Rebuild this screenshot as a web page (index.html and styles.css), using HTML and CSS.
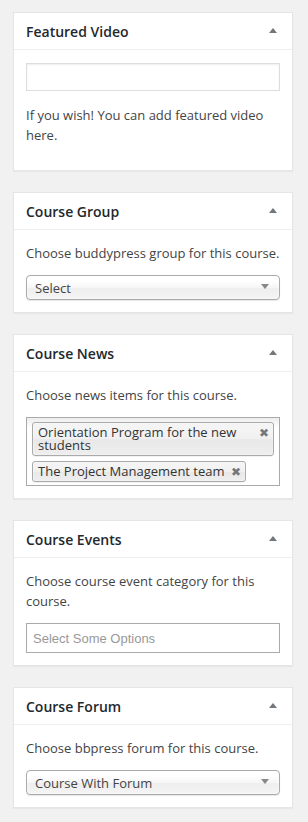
FILE: index.html
```html
<!DOCTYPE html>
<html lang="en">
<head>
    <meta charset="UTF-8">
    <meta name="viewport" content="width=device-width, initial-scale=1.0">
    <title>Course settings</title>
    <link rel="stylesheet" href="styles.css">
</head>
<body>
    <div class="sidebar">
        <div class="postbox">
            <div class="postbox-head">
                <h2>Featured Video</h2>
                <span class="toggle"></span>
            </div>
            <div class="inside">
                <input type="text" class="text-input">
                <p>If you wish! You can add featured video here.</p>
            </div>
        </div>

        <div class="postbox">
            <div class="postbox-head">
                <h2>Course Group</h2>
                <span class="toggle"></span>
            </div>
            <div class="inside">
                <p>Choose buddypress group for this course.</p>
                <div class="chosen-single">
                    <span>Select</span>
                    <b class="arrow"></b>
                </div>
            </div>
        </div>

        <div class="postbox">
            <div class="postbox-head">
                <h2>Course News</h2>
                <span class="toggle"></span>
            </div>
            <div class="inside">
                <p>Choose news items for this course.</p>
                <ul class="chosen-choices">
                    <li class="choice"><span>Orientation Program for the new students</span><a class="choice-close">&#10006;</a></li>
                    <li class="choice"><span>The Project Management team</span><a class="choice-close">&#10006;</a></li>
                </ul>
            </div>
        </div>

        <div class="postbox">
            <div class="postbox-head">
                <h2>Course Events</h2>
                <span class="toggle"></span>
            </div>
            <div class="inside">
                <p>Choose course event category for this course.</p>
                <div class="chosen-search">Select Some Options</div>
            </div>
        </div>

        <div class="postbox">
            <div class="postbox-head">
                <h2>Course Forum</h2>
                <span class="toggle"></span>
            </div>
            <div class="inside">
                <p>Choose bbpress forum for this course.</p>
                <div class="chosen-single">
                    <span>Course With Forum</span>
                    <b class="arrow"></b>
                </div>
            </div>
        </div>
    </div>
</body>
</html>
```

FILE: styles.css
```css
* {
    margin: 0;
    padding: 0;
    box-sizing: border-box;
}

body {
    font-family: 'Open Sans', 'Noto Sans', sans-serif;
    font-size: 13px;
    background-color: #f1f1f1;
    color: #444;
}

.sidebar {
    padding: 12px 15px 0 13px;
}

.postbox {
    background-color: #fff;
    border: 1px solid #e5e5e5;
    box-shadow: 0 1px 1px rgba(0, 0, 0, 0.04);
    margin-bottom: 21px;
}

.postbox-head {
    height: 37px;
    border-bottom: 1px solid #eee;
    display: flex;
    align-items: center;
    justify-content: space-between;
    padding: 0 15px 0 12px;
}

.postbox-head h2 {
    font-size: 14px;
    font-weight: 600;
    color: #23282d;
}

.toggle {
    width: 0;
    height: 0;
    border-left: 4px solid transparent;
    border-right: 4px solid transparent;
    border-bottom: 5px solid #72777c;
    margin-top: -1px;
}

.inside {
    padding: 0 12px 12px;
}

.inside p {
    line-height: 20px;
    margin: 13px 0 12px;
}

.text-input {
    display: block;
    width: 100%;
    height: 28px;
    margin-top: 13px;
    border: 1px solid #ddd;
    box-shadow: inset 0 1px 2px rgba(0, 0, 0, 0.07);
    background: #fff;
}

.text-input + p {
    margin: 14px 0 13px;
}

/* chosen single select */
.chosen-single {
    height: 25px;
    border: 1px solid #aaa;
    border-radius: 4px;
    background: linear-gradient(#fff 20%, #f6f6f6 50%, #eee 52%, #f4f4f4 100%);
    box-shadow: 0 0 3px #fff inset, 0 1px 1px rgba(0, 0, 0, 0.1);
    display: flex;
    align-items: center;
    justify-content: space-between;
    padding: 0 10px 0 8px;
    color: #444;
}

.arrow {
    width: 0;
    height: 0;
    border-left: 4px solid transparent;
    border-right: 4px solid transparent;
    border-top: 5px solid #888;
    margin-top: -2px;
}

/* chosen multi select */
.chosen-choices {
    list-style: none;
    border: 1px solid #aaa;
    background: linear-gradient(#eee 1%, #fff 15%);
    padding: 4px 5px 3px;
    display: flex;
    flex-direction: column;
    align-items: flex-start;
    gap: 5px;
}

.choice {
    position: relative;
    border: 1px solid #aaa;
    border-radius: 3px;
    background: linear-gradient(#f4f4f4 20%, #f0f0f0 50%, #e8e8e8 52%, #eee 100%);
    box-shadow: 0 0 2px #fff inset, 0 1px 0 rgba(0, 0, 0, 0.05);
    padding: 3px 20px 3px 5px;
    line-height: 13px;
    color: #333;
    max-width: 100%;
}

.choice-close {
    position: absolute;
    top: 3px;
    right: 4px;
    font-size: 12px;
    line-height: 13px;
    color: #777;
}

/* chosen search placeholder */
.chosen-search {
    height: 30px;
    border: 1px solid #aaa;
    padding: 0 6px;
    display: flex;
    align-items: center;
    font-family: 'Liberation Sans', Arial, sans-serif;
    color: #999;
    font-size: 13px;
}
```
